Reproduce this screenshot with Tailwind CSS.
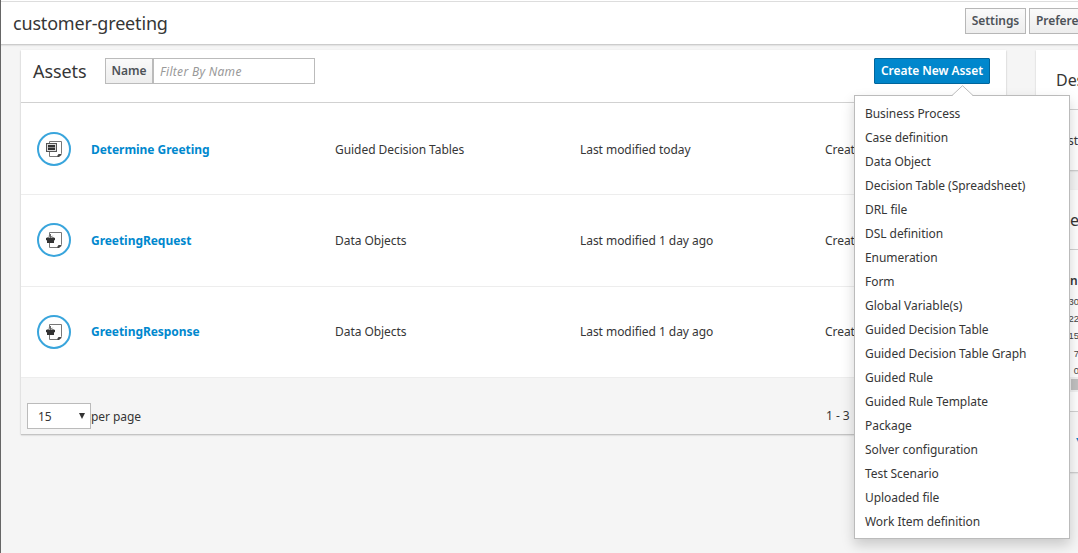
<!DOCTYPE html>
<html lang="en">
<head>
<meta charset="utf-8">
<title>customer-greeting</title>
<script src="https://cdn.jsdelivr.net/npm/@tailwindcss/browser@4"></script>
</head>
<body class="h-[553px] w-[1078px] overflow-hidden bg-[#f5f5f5] font-['Noto_Sans','Open_Sans',sans-serif] text-[12px] leading-5 tracking-[-0.05px] text-[#363636]">
<svg class="hidden">
  <symbol id="page" viewBox="0 0 18 18">
    <path d="M4.500 5V1.500h12V13.500l-3 3h-9V12" fill="none" stroke="#777" stroke-width="1"/>
    <path d="M12.500 17v-1.500l1-1.500h3v1l-2.500 2z" fill="#444"/>
  </symbol>
  <symbol id="table" viewBox="0 0 18 18">
    <use href="#page"/>
    <rect x="1.500" y="3.500" width="10" height="8" fill="#ddd" stroke="#555"/>
    <path d="M3 5h7v2H3zM3 8h7v2H3z" fill="#333"/>
    <path d="M3 7h7v1H3z" fill="#888"/>
  </symbol>
  <symbol id="object" viewBox="0 0 18 18">
    <use href="#page"/>
    <path d="M1 7l2-.8 2.500.8 2.500-.8 2 .8v2l-1 .5V12H2V9.500L1 9z" fill="#333"/>
    <path d="M5.500 3v4M3.500 4.800l2 2 2-2" fill="none" stroke="#666"/>
  </symbol>
</svg>
<div class="relative flex h-full flex-col overflow-hidden border-l border-[#666]">
  <header class="flex h-[45px] shrink-0 items-center border-t border-b border-t-white border-b-[#ccc] bg-white shadow-[inset_0_1px_0_#ddd,0_1px_1px_#e4e4e4]">
    <h1 class="ml-3 w-[952px] shrink-0 text-[18px] leading-6 tracking-[-0.18px]">customer-greeting</h1>
    <button class="mr-[3px] mb-[3px] h-[26px] w-[61px] shrink-0 border border-[#b7b7b7] bg-linear-to-b from-[#fafafa] to-[#ededed] text-center font-semibold text-[#4d5258]">Settings</button>
    <button class="mb-[3px] h-[26px] w-[90px] shrink-0 border border-[#b7b7b7] bg-linear-to-b from-[#fafafa] to-[#ededed] pl-[6px] text-left font-semibold text-[#4d5258]">Preferences</button>
  </header>
  <main class="flex items-start pt-[5px] pl-5">
    <section class="h-[384px] w-[985px] shrink-0 bg-white shadow-[0_1px_1px_#c4c4c4,0_1px_2px_#ccc]">
      <div class="flex h-[53px] items-start border-b border-[#d1d1d1] pt-2 pl-3">
        <h2 class="w-[72px] text-[18px] leading-[26px] tracking-[-0.1px]">Assets</h2>
        <span class="h-[26px] w-[48px] border border-[#bbb] bg-linear-to-b from-[#fafafa] to-[#ededed] text-center leading-6 font-semibold text-[#4d5258]">Name</span>
        <input class="h-[26px] w-[162px] border border-[#bbb] px-[6px] placeholder:tracking-[0.3px] placeholder:text-[#999] placeholder:italic" placeholder="Filter By Name">
        <button class="ml-[559px] h-[26px] w-[116px] rounded-[1px] border border-[#00659c] bg-linear-to-b from-[#0088ce] to-[#0084c8] leading-6 font-semibold text-white">Create New Asset</button>
      </div>
      <div class="flex h-[92px] items-center border-b border-[#ededed] pl-4">
        <div class="flex size-[34px] items-center justify-center rounded-full border-2 border-[#39a5dc]"><svg class="size-[18px]"><use href="#table"/></svg></div>
        <a class="ml-5 w-[244px] pt-[2px] font-bold text-[#0088ce]">Determine Greeting</a><span class="w-[245px] pt-[2px]">Guided Decision Tables</span><span class="w-[245px] pt-[2px]">Last modified today</span><span class="pt-[2px]">Created</span>
      </div>
      <div class="flex h-[92px] items-center border-b border-[#ededed] pl-4">
        <div class="mb-px flex size-[34px] items-center justify-center rounded-full border-2 border-[#39a5dc]"><svg class="size-[18px]"><use href="#object"/></svg></div>
        <a class="ml-5 w-[244px] font-bold text-[#0088ce]">GreetingRequest</a><span class="w-[245px]">Data Objects</span><span class="w-[245px]">Last modified 1 day ago</span><span>Created</span>
      </div>
      <div class="flex h-[91px] items-center border-b border-[#ededed] pl-4">
        <div class="flex size-[34px] items-center justify-center rounded-full border-2 border-[#39a5dc]"><svg class="size-[18px]"><use href="#object"/></svg></div>
        <a class="ml-5 w-[244px] font-bold text-[#0088ce]">GreetingResponse</a><span class="w-[245px]">Data Objects</span><span class="w-[245px]">Last modified 1 day ago</span><span>Created</span>
      </div>
      <div class="flex h-[56px] items-start bg-[#f5f5f5] pt-[25px] pl-[6px]">
        <div class="flex h-[26px] w-[64px] items-center justify-between border border-[#bbb] bg-white pr-[5px] pl-[10px]"><span class="pt-px">15</span><svg class="h-[6px] w-[6px]" viewBox="0 0 6 6"><path d="M0 0h6L3 6z" fill="#333"/></svg></div>
        <span class="w-[735px] pt-[4px]">per page</span><span class="pt-[3px]">1 - 3</span>
      </div>
    </section>
    <aside class="ml-[30px] flex w-[200px] shrink-0 flex-col gap-5">
      <section class="h-[120px] bg-white shadow-[0_1px_1px_#cfcfcf,0_1px_2px_#d8d8d8]">
        <h2 class="h-[60px] border-b border-[#d1d1d1] pt-[17px] pl-5 text-[16px] leading-[26px]">Description</h2>
        <p class="pt-[21px] pl-8">st</p>
      </section>
      <section class="h-[282px] bg-white shadow-[0_1px_1px_#cfcfcf,0_1px_2px_#d8d8d8]">
        <h2 class="h-[60px] border-b border-[#d1d1d1] pt-[17px] pl-[34px] text-[16px] leading-[26px]">e</h2>
        <p class="pt-[21px] pl-[34px] font-semibold">n</p>
        <div class="flex w-[43px] flex-col items-end pt-[2px] font-['Liberation_Sans',sans-serif] text-[9.5px] leading-[17.2px] text-[#444]"><span>30</span><span>22</span><span>15</span><span>7</span><span>0</span></div>
        <div class="-mt-[2px] h-[15px] bg-[#f1f1f1] pt-[2px] pl-[35px]"><div class="h-[11px] bg-[#c1c1c1]"></div></div>
        <div class="mt-[19px] h-[61px] border-t border-[#d1d1d1] bg-[#fafafa] pt-[18px] pl-10 text-[#0088ce]">▾</div>
      </section>
    </aside>
  </main>
  <div class="absolute top-[95px] left-[853px] w-[216px] border border-[#bbb] bg-white pt-[6px] pb-[4px] leading-6 shadow-[0_6px_12px_rgba(0,0,0,0.18)]">
    <svg class="absolute -top-[11px] left-[97px] h-[11px] w-[21px]" viewBox="0 0 21 11"><path d="M0 11L10.500 .7 21 11z" fill="#fff"/><path d="M0 10.500L10.500 .7 21 10.500" fill="none" stroke="#bbb"/></svg>
    <ul class="pl-[10px]">
      <li>Business Process</li><li>Case definition</li><li>Data Object</li><li>Decision Table (Spreadsheet)</li><li>DRL file</li><li>DSL definition</li><li>Enumeration</li><li>Form</li><li>Global Variable(s)</li><li>Guided Decision Table</li><li>Guided Decision Table Graph</li><li>Guided Rule</li><li>Guided Rule Template</li><li>Package</li><li>Solver configuration</li><li>Test Scenario</li><li>Uploaded file</li><li>Work Item definition</li>
    </ul>
  </div>
</div>
</body>
</html>
